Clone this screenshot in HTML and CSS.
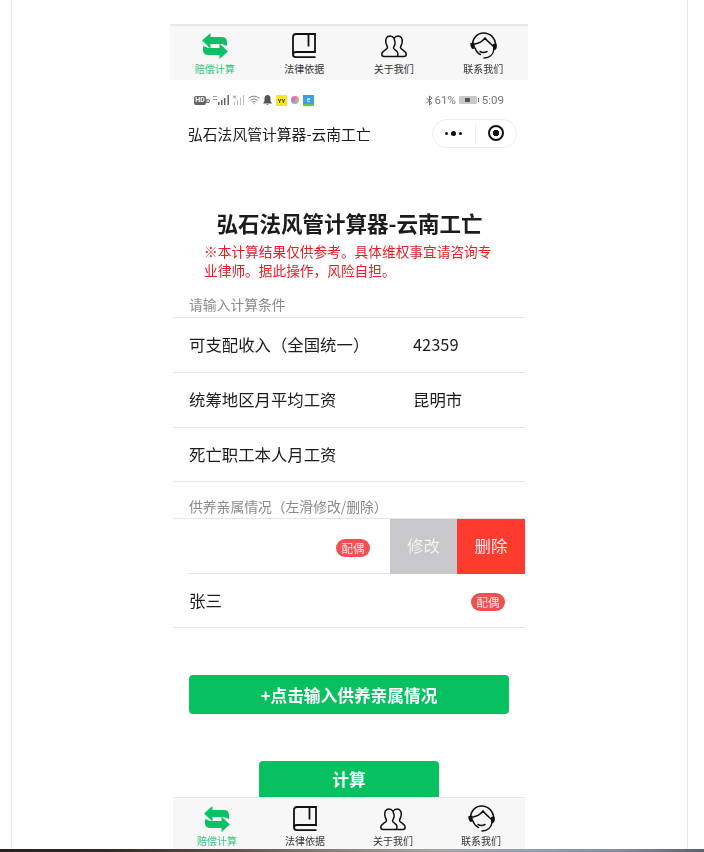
FILE: index.html
```html
<!DOCTYPE html>
<html lang="zh-CN">
<head>
<meta charset="utf-8">
<title>弘石法风管计算器-云南工亡</title>
<link rel="stylesheet" href="styles.css">
</head>
<body>
<svg class="defs" width="0" height="0" aria-hidden="true">
  <symbol id="i-swap" viewBox="0 0 26 26">
    <path fill="#0cc066" d="M0 7.500 8.500 0V4H19.500Q25 4 25 9V13L19.500 11H8.500V15.500Z"/>
    <path fill="#0cc066" d="M26 18.500 17.500 26V22H6.500Q1 22 1 17V13L6.500 15H17.500V10.500Z"/>
  </symbol>
  <symbol id="i-book" viewBox="0 0 24 26">
    <path fill="none" stroke="#111" stroke-width="1.800" d="M1 21V4Q1 1 4 1H23V19H4Q1 19 1 21.500Q1 24.200 4 24.200H23.500M16.500 1V13.500"/>
  </symbol>
  <symbol id="i-people" viewBox="0 0 26 23">
    <path fill="none" stroke="#111" stroke-width="1.500" stroke-linejoin="round" d="M9 1C5.500 1 4.500 4 4.800 7 5 9.500 6.500 11 6.500 12.500 6.500 14.500 1 15.500.8 19 .8 20.500 1.500 21.500 3 21.500H23C24.500 21.500 25.200 20.500 25.200 19 25 15.500 19.500 14.500 19.500 12.500 19.500 11 21 9.500 21.200 7 21.500 4 20.500 1 17 1 15 1 13.800 2 13 3.500 12.200 2 11 1 9 1ZM13 3.500C13.800 6 14.500 7 14 9 13.500 11 12.500 12 12.500 13 12.500 14.500 17 15.500 17 18.500 17 20 16.500 21 16 21.500"/>
  </symbol>
  <symbol id="i-head" viewBox="0 0 27 27">
    <g fill="none" stroke="#111" stroke-width="1.500" stroke-linecap="round">
      <path d="M2.500 13C2.500 6 7.500 1 13.500 1 20 1 25.500 6 25.500 13"/>
      <path d="M5 12C9 11.500 13 8.500 15 6 17.500 9.500 20.500 11.500 23 14"/>
      <path d="M5 16C6 19 8 21.500 10.500 22.500"/>
      <path d="M10 19.500Q13.500 21.500 17 19.500"/>
      <path d="M24 17C23.500 22.500 19.500 25.800 14 26"/>
    </g>
    <path fill="#111" d="M.5 11 4.500 10.500 5 16.500 2.500 17C1 16 0 13.500.5 11ZM23 12 26.500 11.500C27.300 14 26.800 17 25 18L23 17.500Z"/>
  </symbol>
</svg>

<div class="frame">
  <div class="phone">
    <nav class="tabbar tabbar-top">
      <div class="tab tab-on"><svg class="ic ic-swap"><use href="#i-swap"/></svg><span>赔偿计算</span></div>
      <div class="tab"><svg class="ic ic-book"><use href="#i-book"/></svg><span>法律依据</span></div>
      <div class="tab"><svg class="ic ic-people"><use href="#i-people"/></svg><span>关于我们</span></div>
      <div class="tab"><svg class="ic ic-head"><use href="#i-head"/></svg><span>联系我们</span></div>
    </nav>

    <div class="inner">
      <div class="statusbar">
        <div class="st-left">
          <span class="hd">HD</span>
          <span class="hd-b">D</span>
          <svg class="sig" viewBox="0 0 17 10"><path fill="#999" d="M0 1h4v1H0zM0 4h4v1H0z"/><path fill="#666" d="M5 7h1.500v3H5zM8 5h1.500v5H8zM11 3h1.500v7H11zM14.500 0H16v10h-1.500z"/></svg>
          <svg class="sig2" viewBox="0 0 11 10"><path fill="none" stroke="#888" d="M0 .5l3 3M3 .5l-3 3"/><path fill="#bbb" d="M1 7h1v3H1zM4 5h1v5H4zM7 3h1v7H7zM10 0h1v10h-1z"/></svg>
          <svg class="wifi" viewBox="0 0 13 10"><g fill="none" stroke="#777"><path d="M.5 3.200Q6.500-1.500 12.500 3.200M2.500 5.300Q6.500 2.200 10.500 5.300M4.500 7.300Q6.500 5.800 8.500 7.300"/></g><path fill="#777" d="M5.500 8.500h2l-1 1.500z"/></svg>
          <svg class="bell" viewBox="0 0 9 10"><path fill="#555" d="M4.500 0C6.500 0 7.500 1.500 7.500 3.500V6L9 8.500H0L1.500 6V3.500C1.500 1.500 2.500 0 4.500 0ZM3.200 9H5.800L4.500 10Z"/></svg>
          <span class="app app-yy">YY</span>
          <span class="app app-dot"></span>
          <span class="app app-blue">e</span>
        </div>
        <div class="st-right">
          <svg class="bt" viewBox="0 0 7 11"><path fill="none" stroke="#666" d="M.5 3 6 7.800 3.500 10V1L6 3.200.5 8"/></svg>
          <span>61%</span>
          <span class="batt"><i></i></span>
          <span class="time">5:09</span>
        </div>
      </div>

      <header class="navbar">
        <span class="nav-title">弘石法风管计算器-云南工亡</span>
        <div class="capsule">
          <div class="cap-dots"><i></i><b></b><i></i></div>
          <div class="cap-line"></div>
          <div class="cap-rec"><b></b></div>
        </div>
      </header>

      <main class="main">
        <h1 class="title">弘石法风管计算器-云南工亡</h1>
        <p class="warn">※本计算结果仅供参考。具体维权事宜请咨询专业律师。据此操作，风险自担。</p>

        <div class="sec sec-one">请输入计算条件</div>
        <div class="row"><span class="lbl">可支配收入（全国统一）</span><span class="val">42359</span></div>
        <div class="row"><span class="lbl">统筹地区月平均工资</span><span class="val">昆明市</span></div>
        <div class="row row-last"><span class="lbl">死亡职工本人月工资</span></div>

        <div class="sec sec-two">供养亲属情况（左滑修改/删除）</div>
        <div class="swipe">
          <div class="swipe-body"><span class="tag">配偶</span></div>
          <div class="act act-edit">修改</div>
          <div class="act act-del">删除</div>
        </div>
        <div class="row person"><span class="lbl">张三</span><span class="tag">配偶</span></div>

        <button class="btn btn-add">+点击输入供养亲属情况</button>
        <button class="btn btn-calc">计算</button>
      </main>

      <nav class="tabbar tabbar-bottom">
        <div class="tab tab-on"><svg class="ic ic-swap"><use href="#i-swap"/></svg><span>赔偿计算</span></div>
        <div class="tab"><svg class="ic ic-book"><use href="#i-book"/></svg><span>法律依据</span></div>
        <div class="tab"><svg class="ic ic-people"><use href="#i-people"/></svg><span>关于我们</span></div>
        <div class="tab"><svg class="ic ic-head"><use href="#i-head"/></svg><span>联系我们</span></div>
      </nav>
    </div>
  </div>
</div>
<div class="strip"></div>
</body>
</html>
```
FILE: styles.css
```css
* { box-sizing: border-box; }
html, body { margin: 0; padding: 0; height: 852px; overflow: hidden; background: #fff; }
body { font-family: "Noto Sans CJK SC", "Noto Sans", sans-serif; color: #1c1c1c; display: flex; flex-direction: column; }
.defs { position: absolute; }

.frame { width: 677px; height: 849px; margin-left: 11px; border-left: 1px solid #e6e6e6; border-right: 1px solid #e6e6e6; padding: 24px 0 0 158px; }
.strip { height: 3px; background: linear-gradient(90deg, #26241f 0%, #2c2a24 15%, #5a5242 32%, #8d8a80 50%, #a5a6a4 62%, #8fa0b8 75%, #7f8da6 88%, #5a6070 100%); }

.phone { width: 358px; filter: blur(.35px); }
.inner { display: flex; flex-direction: column; padding: 0 3px; height: 769px; }

.tabbar { display: grid; grid-template-columns: repeat(4, 1fr); background: #f7f7f7; border-top: 2px solid #e8e8e8; }
.tabbar-top { height: 56px; }
.tabbar-bottom { height: 52px; border-top-width: 1px; flex: none; }
.tab { display: flex; flex-direction: column; align-items: center; font-size: 10px; line-height: 14px; color: #333; }
.tab-on { color: #3bc47f; }
.tabbar-top .tab { padding-top: 7px; }
.tabbar-top .tab span { margin-top: auto; margin-bottom: 4px; }
.tabbar-bottom .tab { padding-top: 8px; }
.tabbar-bottom .tab span { margin-top: auto; margin-bottom: 1px; }
.ic { display: block; flex: none; }
.ic-swap { width: 26px; height: 26px; }
.ic-book { width: 24px; height: 26px; }
.ic-people { width: 26px; height: 23px; margin-top: 2px; }
.ic-head { width: 27px; height: 27px; margin-top: -1px; }

.statusbar { display: flex; justify-content: space-between; align-items: center; height: 14px; margin-top: 13px; padding: 0 21px; font-size: 11.500px; color: #777; font-family: "Roboto", sans-serif; flex: none; }
.st-left, .st-right { display: flex; align-items: center; }
.hd { background: #666; color: #fff; font-size: 7px; line-height: 9px; height: 9px; width: 12px; text-align: center; border-radius: 2px; font-weight: 700; }
.hd-b { font-size: 6px; font-weight: 700; width: 4px; margin-right: 3px; color: #555; }
.sig { width: 17px; height: 10px; margin-right: 3px; }
.sig2 { width: 11px; height: 10px; margin-right: 4px; }
.wifi { width: 12px; height: 10px; margin-right: 3px; }
.bell { width: 9px; height: 10px; margin-right: 4px; }
.app { width: 11px; height: 11px; margin-right: 4px; display: block; }
.app-yy { background: #f7e71a; color: #333; font-size: 6px; line-height: 11px; text-align: center; font-weight: 700; }
.app-dot { width: 8px; height: 8px; border-radius: 50%; background: conic-gradient(#ef6aa8, #f2a35e, #6fb6e6, #a77ce0, #ef6aa8); }
.app-blue { background: #3aa0e8; color: #fff; font-size: 7px; line-height: 10px; text-align: center; border-bottom: 2px solid #6cc24a; margin-right: 0; }
.bt { width: 7px; height: 11px; margin-right: 1px; }
.batt { width: 18px; height: 8px; margin: 0 5px 0 3px; background: #c9c9c9; border-radius: 1px; position: relative; display: flex; align-items: center; justify-content: center; }
.batt i { width: 5px; height: 4px; background: #555; }
.batt::after { content: ""; position: absolute; right: -2px; top: 2px; width: 1px; height: 4px; background: #666; }

.navbar { display: flex; align-items: center; justify-content: space-between; height: 30px; margin-top: 11px; padding: 0 8px 0 15px; flex: none; }
.nav-title { font-size: 14.800px; white-space: nowrap; }
.capsule { width: 85px; height: 29px; border: 1px solid #ececec; border-radius: 15px; display: flex; align-items: center; }
.cap-dots { width: 42px; display: flex; align-items: center; justify-content: center; gap: 3px; padding-right: 2px; }
.cap-dots i { width: 3px; height: 3px; border-radius: 50%; background: #111; }
.cap-dots b { width: 5px; height: 5px; border-radius: 50%; background: #111; }
.cap-line { width: 1px; height: 19px; background: #eee; }
.cap-rec { flex: 1; display: flex; justify-content: center; align-items: center; }
.cap-rec b { width: 16px; height: 16px; border: 2px solid #111; border-radius: 50%; background: radial-gradient(circle, #111 0 3px, transparent 3.500px); }

.main { flex: 1; min-height: 0; overflow: hidden; display: flex; flex-direction: column; }
.title { margin: 60px 0 0; text-align: center; font-size: 21.500px; line-height: 30px; font-weight: 700; white-space: nowrap; padding-left: 1px; }
.warn { margin: 4px 0 0; padding: 0 29px 0 31px; font-size: 13.700px; line-height: 19px; color: #ea1c24; }
.sec { padding-left: 16px; font-size: 13.800px; line-height: 19px; color: #8a8a8a; border-bottom: 1px solid #e6e6e6; flex: none; }
.sec-one { margin-top: 15px; height: 23px; }
.sec-two { margin-top: 15px; height: 22px; }
.row { display: flex; align-items: center; height: 55px; padding: 0 20px 2px 16px; border-bottom: 1px solid #e6e6e6; font-size: 16.400px; flex: none; }
.row-last { height: 54px; }
.lbl { width: 224px; flex: none; white-space: nowrap; }
.val { flex: 1; }
.person { justify-content: space-between; height: 54px; }
.person .lbl { width: auto; }
.person .tag { margin-top: 5px; }
.tag { width: 34px; height: 18px; border-radius: 9px; background: #f05050; color: #fbe9e9; font-size: 11.500px; line-height: 18px; text-align: center; display: block; }

.swipe { display: flex; height: 55px; flex: none; }
.swipe-body { flex: 1; margin-left: 15px; border-bottom: 1px solid #e6e6e6; display: flex; align-items: center; justify-content: flex-end; padding: 3px 20px 0 0; }
.act { width: 67px; display: flex; align-items: center; justify-content: center; color: #f2f2f2; font-size: 16.400px; flex: none; padding-bottom: 3px; }
.act-edit { background: #c7c7cc; }
.act-del { background: #ff3b30; width: 68px; }

.btn { display: block; border: 0; background: #07c160; color: #fff; font-family: inherit; font-weight: 700; font-size: 16.700px; padding: 0; flex: none; border-radius: 4px; }
.btn-add { width: 320px; height: 39px; margin: 47px 0 0 16px; }
.btn-calc { width: 180px; height: 44px; margin: 47px 0 0 86px; padding-bottom: 8px; }
```
